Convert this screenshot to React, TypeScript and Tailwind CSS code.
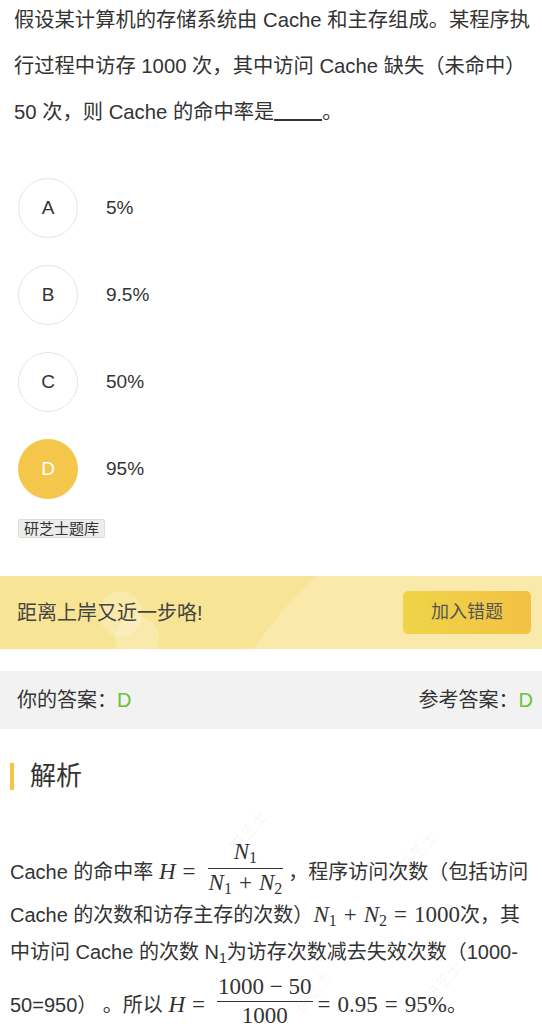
import React from "react";

const SANS = '"Liberation Sans", Arial, "Noto Sans CJK SC", sans-serif';
const SERIF = '"Liberation Serif", "DejaVu Serif", "Times New Roman", serif';

function M({ children, italic = false }: { children: React.ReactNode; italic?: boolean }) {
  return (
    <span style={{ fontFamily: SERIF }} className={"text-[23px] " + (italic ? "italic" : "")}>
      {children}
    </span>
  );
}

function NSub({ n }: { n: string }) {
  return (
    <span style={{ fontFamily: SERIF }} className="whitespace-nowrap">
      <span className="italic text-[23px]">N</span>
      <span className="text-[16px] relative top-[4px]">{n}</span>
    </span>
  );
}

function Frac({ num, den }: { num: React.ReactNode; den: React.ReactNode }) {
  return (
    <span className="inline-flex flex-col items-center align-middle mx-[5px] relative top-[-5px]">
      <span className="leading-[28px] px-[1px]">{num}</span>
      <span className="w-full border-t border-[#333]"></span>
      <span className="leading-[28px] px-[1px]">{den}</span>
    </span>
  );
}

function Option({ letter, text, active = false }: { letter: string; text: string; active?: boolean }) {
  return (
    <div className="flex items-center">
      <div
        className={
          active
            ? "w-[60px] h-[60px] rounded-full bg-[#f5c64c] text-white flex items-center justify-center text-[19px]"
            : "w-[60px] h-[60px] rounded-full border border-[#e6e6e6] text-[#333] flex items-center justify-center text-[19px]"
        }
      >
        {letter}
      </div>
      <div className="ml-[28px] text-[19px] text-[#333]">{text}</div>
    </div>
  );
}

function Watermark({ className }: { className: string }) {
  return (
    <span
      className={"absolute text-[16px] text-[#000]/[0.05] rotate-[-50deg] pointer-events-none select-none " + className}
    >
      研芝士
    </span>
  );
}

export default function App() {
  return (
    <div className="w-[542px] h-[1024px] overflow-hidden bg-white text-[#333]" style={{ fontFamily: SANS }}>
      {/* Question */}
      <div className="pl-[14px] pr-[8px] mt-[-3px] text-[20.3px] leading-[46px] text-[#333]">
        假设某计算机的存储系统由 Cache 和主存组成。某程序执行过程中访存 1000 次，其中访问 Cache 缺失（未命中）50 次，则 Cache 的命中率是
        <span className="inline-block w-[48px] border-b-[2px] border-[#333] h-[20px] align-[-2px]"></span>。
      </div>

      {/* Options */}
      <div className="pl-[18px] mt-[43px] flex flex-col gap-[27px]">
        <Option letter="A" text="5%" />
        <Option letter="B" text="9.5%" />
        <Option letter="C" text="50%" />
        <Option letter="D" text="95%" active />
      </div>

      <div className="pl-[18px] mt-[18px]">
        <span className="inline-block bg-[#ececec] border border-[#dcdcdc] rounded-[2px] px-[5px] text-[15px] leading-[17px] text-[#333]">
          研芝士题库
        </span>
      </div>

      {/* Banner */}
      <div className="relative mt-[35px] h-[73px] bg-[#f8e495] overflow-hidden flex items-center justify-between pl-[17px] pr-[11px]">
        <div className="absolute left-[175px] top-[-120px] w-[890px] h-[890px] rounded-full bg-white/20"></div>
        <div className="absolute left-[100px] top-[15px] w-[42px] h-[46px] rounded-full bg-white/20"></div>
        <div className="absolute left-[115px] top-[40px] w-[44px] h-[44px] rounded-full bg-white/20"></div>
        <span className="relative text-[20px] text-[#444]">距离上岸又近一步咯!</span>
        <button className="relative w-[128px] h-[43px] rounded-[5px] bg-gradient-to-r from-[#efd448] to-[#f3c143] text-[18px] text-[#555]">
          加入错题
        </button>
      </div>

      {/* Answers */}
      <div className="mt-[22px] h-[58px] bg-[#f2f2f2] flex items-center justify-between pl-[17px] pr-[9px] text-[20px] text-[#333]">
        <span>
          你的答案：<span className="text-[#67c23a]">D</span>
        </span>
        <span>
          参考答案：<span className="text-[#67c23a]">D</span>
        </span>
      </div>

      {/* Analysis header */}
      <div className="mt-[32px] flex items-center pl-[10px]">
        <span className="w-[4px] h-[27px] bg-[#f5c542]"></span>
        <span className="ml-[16px] text-[26px] leading-[30px] text-[#333]">解析</span>
      </div>

      {/* Explanation */}
      <div className="relative mt-[49px] pl-[10px] pr-[2px] text-[20px] text-[#333]">
        <Watermark className="left-[225px] top-[-20px]" />
        <Watermark className="left-[290px] top-[140px]" />
        <Watermark className="left-[420px] top-[130px]" />
        <Watermark className="left-[395px] top-[0px]" />

        <div className="leading-[64px] h-[64px] whitespace-nowrap">
          Cache 的命中率{" "}
          <M italic>H</M>
          <M>
            <span className="mx-[7px]">=</span>
          </M>
          <Frac
            num={<NSub n="1" />}
            den={
              <span>
                <NSub n="1" />
                <M>
                  <span className="mx-[7px]">+</span>
                </M>
                <NSub n="2" />
              </span>
            }
          />
          ，程序访问次数（包括访问
        </div>
        <div className="leading-[36px] whitespace-nowrap mt-[-7px]">
          Cache 的次数和访存主存的次数）
          <NSub n="1" />
          <M>
            <span className="mx-[7px]">+</span>
          </M>
          <NSub n="2" />
          <M>
            <span className="mx-[7px]">=</span>
          </M>
          <M>1000</M>
          次，其
        </div>
        <div className="leading-[34px] whitespace-nowrap">
          中访问 Cache 的次数 N<sub className="text-[14px]">1</sub>为访存次数减去失效次数（1000-
        </div>
        <div className="leading-[64px] h-[64px] whitespace-nowrap mt-[4px]">
          50=950）&nbsp;。所以{" "}
          <M italic>H</M>
          <M>
            <span className="mx-[7px]">=</span>
          </M>
          <Frac num={<M>1000 − 50</M>} den={<M>1000</M>} />
          <M>
            <span className="mr-[7px]">=</span>0.95<span className="mx-[7px]">=</span>95%
          </M>
          。
        </div>
      </div>
    </div>
  );
}
